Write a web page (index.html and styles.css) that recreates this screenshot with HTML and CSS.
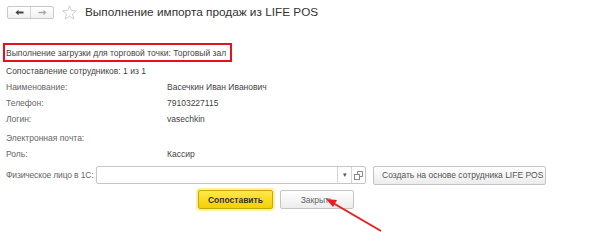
FILE: index.html
```html
<!DOCTYPE html>
<html lang="ru">
<head>
    <meta charset="UTF-8">
    <title>Выполнение импорта продаж из LIFE POS</title>
    <link rel="stylesheet" href="styles.css">
</head>
<body>
    <div class="titlebar">
        <div class="nav">
            <span class="nav-btn">
                <svg width="9" height="7" viewBox="0 0 9 7"><path d="M0.5 3.5L3.5 0.8V2.6H8.5V4.4H3.5V6.2Z" fill="#444"/></svg>
            </span>
            <span class="nav-btn">
                <svg width="9" height="7" viewBox="0 0 9 7"><path d="M8.5 3.5L5.5 0.8V2.8H0.5V4.2H5.5V6.2Z" fill="#aaa"/></svg>
            </span>
        </div>
        <svg class="star" width="15" height="15" viewBox="0 0 15 15">
            <polygon points="7.5,0.8 9.4,5.6 14.4,5.8 10.5,9 11.9,14 7.5,11.2 3.1,14 4.5,9 0.6,5.8 5.6,5.6" fill="none" stroke="#c8c8c8" stroke-width="0.9"/>
        </svg>
        <h1>Выполнение импорта продаж из LIFE POS</h1>
    </div>

    <div class="form">
        <div class="highlight">Выполнение загрузки для торговой точки: Торговый зал</div>
        <div class="row">Сопоставление сотрудников: 1 из 1</div>
        <div class="row"><span class="label">Наименование:</span><span class="value">Васечкин Иван Иванович</span></div>
        <div class="row"><span class="label">Телефон:</span><span class="value">79103227115</span></div>
        <div class="row"><span class="label">Логин:</span><span class="value">vasechkin</span></div>
        <div class="row tall"><span class="label">Электронная почта:</span><span class="value"></span></div>
        <div class="row"><span class="label">Роль:</span><span class="value">Кассир</span></div>
        <div class="field-row">
            <span class="field-label">Физическое лицо в 1С:</span>
            <div class="input">
                <span class="input-text"></span>
                <span class="input-btn">&#9662;</span>
                <span class="input-btn">
                    <svg width="9" height="9" viewBox="0 0 9 9"><rect x="0.5" y="3.5" width="5" height="5" fill="none" stroke="#888"/><path d="M3.5 3.5V0.5h5v5h-3" fill="none" stroke="#888"/></svg>
                </span>
            </div>
            <button class="btn create">Создать на основе сотрудника LIFE POS</button>
        </div>
        <div class="actions">
            <button class="btn primary">Сопоставить</button>
            <button class="btn close">Закрыть</button>
        </div>
    </div>

    <svg class="arrow" width="602" height="252" viewBox="0 0 602 252">
        <line x1="381" y1="231" x2="333" y2="203" stroke="#ee1c1c" stroke-width="2"/>
        <polygon points="326,199 337,200 333,207" fill="#ee1c1c"/>
    </svg>
</body>
</html>
```

FILE: styles.css
```css
body {
    margin: 0;
    font-family: Arial, "Liberation Sans", sans-serif;
    font-size: 8.5px;
    color: #444;
    background: #fff;
    width: 602px;
    height: 252px;
    position: relative;
    overflow: hidden;
}
.titlebar {
    display: flex;
    align-items: center;
    height: 22px;
    padding: 1px 0 0 7px;
}
.nav {
    display: flex;
    border: 1px solid #c9c9c9;
    border-radius: 2px;
    background: linear-gradient(#fff, #f0f0f0);
    height: 11px;
}
.nav-btn {
    width: 22px;
    display: flex;
    align-items: center;
    justify-content: center;
}
.nav-btn + .nav-btn {
    border-left: 1px solid #d6d6d6;
}
.star {
    margin-left: 8px;
}
h1 {
    margin: 0 0 0 8px;
    font-size: 11.8px;
    font-weight: normal;
    color: #333;
}
.form {
    padding: 20px 0 0 6px;
}
.highlight {
    border: 2px solid #e8101c;
    margin-left: -3px;
    width: 224px;
    height: 15px;
    line-height: 16px;
    padding-left: 1px;
    margin-bottom: 1px;
    white-space: nowrap;
}
.row {
    display: flex;
    height: 16px;
    line-height: 16px;
    white-space: nowrap;
}
.row.tall {
    height: 19px;
    line-height: 22px;
}
.label {
    width: 161px;
    color: #666;
}
.field-row {
    display: flex;
    align-items: center;
    margin-top: 4px;
    height: 18px;
}
.field-label {
    width: 90px;
    letter-spacing: -0.15px;
    color: #666;
    white-space: nowrap;
}
.input {
    display: flex;
    width: 268px;
    height: 16px;
    border: 1px solid #c6c6c6;
    border-radius: 2px;
}
.input-text {
    flex: 1;
}
.input-btn {
    width: 13px;
    border-left: 1px solid #d6d6d6;
    font-size: 7px;
    line-height: 16px;
    color: #555;
    display: flex;
    align-items: center;
    justify-content: center;
}
.btn {
    font-family: Arial, "Liberation Sans", sans-serif;
    font-size: 8.5px;
    color: #555;
    background: linear-gradient(#fff, #ececec);
    border: 1px solid #c4c4c4;
    border-radius: 2px;
    height: 19px;
    padding: 0 8px;
    margin-left: 7px;
    white-space: nowrap;
    cursor: pointer;
}
.btn.create {
    width: 173px;
}
.actions {
    display: flex;
    margin: 6px 0 0 186px;
}
.btn.primary {
    margin-left: 6px;
    width: 75px;
    font-weight: bold;
    color: #333;
    background: linear-gradient(#ffe84a, #f5d000);
    border: 1px solid #c9a800;
    box-shadow: 0 0 0 2px #fbf0a8;
}
.btn.close {
    width: 74px;
    color: #666;
}
.arrow {
    position: absolute;
    left: 0;
    top: 0;
}
```
